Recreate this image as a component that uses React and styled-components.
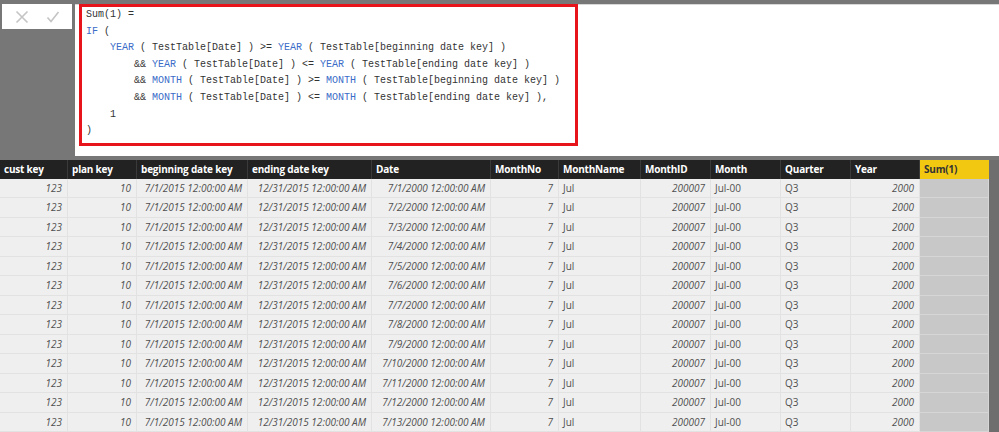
import React from "react";
import styled, { createGlobalStyle } from "styled-components";

const GlobalStyle = createGlobalStyle`
  html, body {
    margin: 0;
    padding: 0;
    background: #777777;
    overflow: hidden;
  }
`;

const Page = styled.div`
  width: 999px;
  height: 432px;
  background: #777777;
  padding-top: 4px;
  box-sizing: border-box;
  overflow: hidden;
  display: flex;
  flex-direction: column;
  gap: 4px;
`;

const FormulaBar = styled.div`
  display: flex;
  align-items: flex-start;
  height: 153px;
`;

const ButtonBox = styled.div`
  margin-left: 2px;
  width: 70px;
  height: 25px;
  background: #ffffff;
  display: flex;
  align-items: center;
  justify-content: space-around;
  padding: 0 4px;
  box-sizing: border-box;
`;

const FormulaPanel = styled.div`
  margin-left: 3px;
  flex: 1;
  height: 100%;
  background: #ffffff;
  border-top: 1px solid #d8d8d8;
  box-sizing: border-box;
  padding-left: 4px;
`;

const Highlight = styled.div`
  width: 499px;
  height: 142px;
  margin-top: -1px;
  border: 3px solid #e8141c;
  box-sizing: border-box;
  padding: 0 0 0 4px;
`;

const Code = styled.pre`
  margin: 0;
  font-family: "Liberation Mono", "DejaVu Sans Mono", monospace;
  font-size: 10px;
  line-height: 16.6px;
  color: #333333;
`;

const Kw = styled.span`
  color: #3a6cc8;
`;

const Table = styled.div`
  display: flex;
  flex: 1;
`;

const Grid = styled.div`
  width: 989px;
  display: grid;
  grid-template-columns: 68px 69px 111px 124px 119px 68px 82px 70px 70px 70px 69px 69px;
  grid-auto-rows: 19.5px;
  grid-template-rows: 19px;
  font-family: "Segoe UI", "Open Sans", sans-serif;
`;

const Side = styled.div`
  flex: 1;
  background: #6e6e6e;
`;

const Head = styled.div`
  background: ${(p) => (p.$active ? "#f2c811" : "#222222")};
  color: ${(p) => (p.$active ? "#333333" : "#ffffff")};
  border-right: 1px solid ${(p) => (p.$active ? "#f2c811" : "#3a3a3a")};
  font-weight: 700;
  font-size: 10px;
  letter-spacing: -0.2px;
  padding-left: 4px;
  display: flex;
  align-items: center;
  white-space: nowrap;
  overflow: hidden;
`;

const Cell = styled.div`
  background: ${(p) => (p.$active ? "#c8c8c8" : "#efefef")};
  border-right: 1px solid ${(p) => (p.$active ? "#d6d6d6" : "#e2e2e2")};
  border-bottom: 1px solid ${(p) => (p.$active ? "#d6d6d6" : "#e2e2e2")};
  box-sizing: border-box;
  color: #505050;
  font-size: 10px;
  font-style: ${(p) => (p.$num ? "italic" : "normal")};
  justify-content: ${(p) => (p.$num ? "flex-end" : "flex-start")};
  padding: 0 5px 0 4px;
  display: flex;
  align-items: center;
  white-space: nowrap;
  overflow: hidden;
`;

const Icon = styled.svg`
  width: 14px;
  height: 14px;
  stroke: #c4c4c4;
  stroke-width: 1.6;
  fill: none;
`;

const columns = [
  "cust key",
  "plan key",
  "beginning date key",
  "ending date key",
  "Date",
  "MonthNo",
  "MonthName",
  "MonthID",
  "Month",
  "Quarter",
  "Year",
  "Sum(1)",
];

const rows = Array.from({ length: 13 }, (_, i) => [
  ["123", true],
  ["10", true],
  ["7/1/2015 12:00:00 AM", true],
  ["12/31/2015 12:00:00 AM", true],
  [`7/${i + 1}/2000 12:00:00 AM`, true],
  ["7", true],
  ["Jul", false],
  ["200007", true],
  ["Jul-00", false],
  ["Q3", false],
  ["2000", true],
  ["", false],
]);

const App = () => {
  return (
    <>
      <GlobalStyle />
      <Page>
        <FormulaBar>
          <ButtonBox>
            <Icon viewBox="0 0 14 14">
              <path d="M1.5 1.5 L12.5 12.5 M12.5 1.5 L1.5 12.5" />
            </Icon>
            <Icon viewBox="0 0 14 14">
              <path d="M1.5 7.5 L5 11.5 L12.5 2" />
            </Icon>
          </ButtonBox>
          <FormulaPanel>
            <Highlight>
              <Code>
                {"Sum(1) =\n"}
                <Kw>IF</Kw>
                {" (\n    "}
                <Kw>YEAR</Kw>
                {" ( TestTable[Date] ) >= "}
                <Kw>YEAR</Kw>
                {" ( TestTable[beginning date key] )\n        && "}
                <Kw>YEAR</Kw>
                {" ( TestTable[Date] ) <= "}
                <Kw>YEAR</Kw>
                {" ( TestTable[ending date key] )\n        && "}
                <Kw>MONTH</Kw>
                {" ( TestTable[Date] ) >= "}
                <Kw>MONTH</Kw>
                {" ( TestTable[beginning date key] )\n        && "}
                <Kw>MONTH</Kw>
                {" ( TestTable[Date] ) <= "}
                <Kw>MONTH</Kw>
                {" ( TestTable[ending date key] ),\n    1\n)"}
              </Code>
            </Highlight>
          </FormulaPanel>
        </FormulaBar>
        <Table>
          <Grid>
            {columns.map((c, i) => (
              <Head key={c} $active={i === columns.length - 1}>
                {c}
              </Head>
            ))}
            {rows.map((r, ri) =>
              r.map(([v, num], ci) => (
                <Cell
                  key={`${ri}-${ci}`}
                  $num={num}
                  $active={ci === columns.length - 1}
                >
                  {v}
                </Cell>
              ))
            )}
          </Grid>
          <Side />
        </Table>
      </Page>
    </>
  );
};

export default App;
